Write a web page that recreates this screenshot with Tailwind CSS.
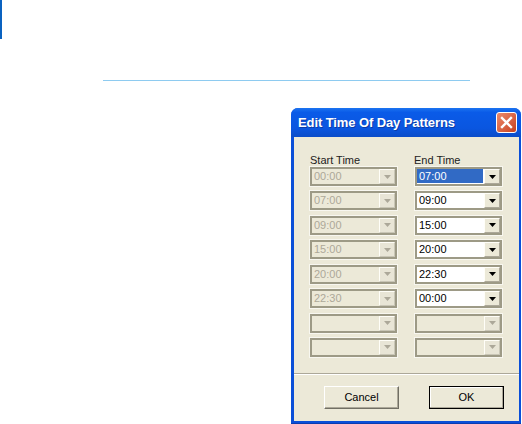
<!DOCTYPE html>
<html lang="en">
<head>
<meta charset="UTF-8">
<title>Edit Time Of Day Patterns</title>
<script src="https://cdn.jsdelivr.net/npm/@tailwindcss/browser@4"></script>
</head>
<body class="bg-white w-[522px] h-[424px] overflow-hidden font-['Liberation_Sans',sans-serif]">

<!-- page behind the dialog -->
<div class="w-[2px] h-[39px] bg-[#0a62c0]"></div>
<div class="ml-[103px] mt-[41px] w-[367px] h-[1px] bg-[#8ecbf0]"></div>

<!-- dialog -->
<div class="ml-[291px] mt-[27px] w-[230px] h-[316px] flex flex-col bg-[#0a4fd8] rounded-t-[7px] pl-[3px] pr-[2px] pb-[3px] shadow-[inset_0_-1px_0_#0a3cb0]">
  <div class="h-[29px] shrink-0 -ml-[3px] -mr-[2px] pl-[7px] pr-[4px] flex items-center justify-between rounded-t-[7px] bg-[linear-gradient(to_bottom,#1c74f0_0%,#0a5be8_15%,#0a56e0_70%,#0a4cc8_100%)]">
    <span class="text-white font-bold text-[13px] tracking-[-0.1px] [text-shadow:1px_1px_0_#0a3ca8]">Edit Time Of Day Patterns</span>
    <div class="w-[21px] h-[21px] rounded-[3px] border border-white bg-gradient-to-br from-[#ec8a6c] to-[#c8401c] flex items-center justify-center">
      <svg width="13" height="13" viewBox="0 0 13 13"><path d="M2 2 L11 11 M11 2 L2 11" stroke="#fff" stroke-width="2.4" stroke-linecap="square"/></svg>
    </div>
  </div>

  <div class="flex-1 bg-[#ece9d8] flex flex-col">
    <div class="pl-[15px] pt-[17px] grid grid-cols-[89px_89px] gap-x-[16px]">
      <div class="text-[11px] leading-[13px] text-[#222] pl-[1px]">Start Time</div>
      <div class="text-[11px] leading-[13px] text-[#222]">End Time</div>
    </div>

    <div class="pl-[15px] -mt-[1px] grid grid-cols-[89px_89px] gap-x-[16px] gap-y-[3.43px]">
      <!-- row 1 -->
      <div class="h-[21px] border border-[#f8f7f0]"><div class="h-full flex border-2 border-[#9d9a86] bg-[#ece9d8]"><span class="flex-1 text-[11px] leading-[15px] text-[#aca899] pl-[2px]">00:00</span><span class="w-[16px] h-[15px] bg-[#e8e5d6] border border-t-[#fffef8] border-l-[#fffef8] border-r-[#c9c6b6] border-b-[#c9c6b6] flex items-center justify-center"><svg width="7" height="4" viewBox="0 0 7 4"><path d="M0 0H7L3.500 4Z" fill="#aca899"/></svg></span></div></div>
      <div class="h-[21px] border border-[#f8f7f0]"><div class="h-full flex border-2 border-[#9d9a86] bg-white"><span class="flex-1 text-[11px] leading-[14px] h-[14px] mr-[1px] text-white bg-[#316ac5] pl-[2px]">07:00</span><span class="w-[16px] h-[15px] bg-[#ece9d8] border border-t-[#fffef8] border-l-[#fffef8] border-r-[#aca899] border-b-[#aca899] flex items-center justify-center"><svg width="7" height="4" viewBox="0 0 7 4"><path d="M0 0H7L3.500 4Z" fill="#000"/></svg></span></div></div>
      <!-- row 2 -->
      <div class="h-[21px] border border-[#f8f7f0]"><div class="h-full flex border-2 border-[#9d9a86] bg-[#ece9d8]"><span class="flex-1 text-[11px] leading-[15px] text-[#aca899] pl-[2px]">07:00</span><span class="w-[16px] h-[15px] bg-[#e8e5d6] border border-t-[#fffef8] border-l-[#fffef8] border-r-[#c9c6b6] border-b-[#c9c6b6] flex items-center justify-center"><svg width="7" height="4" viewBox="0 0 7 4"><path d="M0 0H7L3.500 4Z" fill="#aca899"/></svg></span></div></div>
      <div class="h-[21px] border border-[#f8f7f0]"><div class="h-full flex border-2 border-[#9d9a86] bg-white"><span class="flex-1 text-[11px] leading-[15px] text-black pl-[2px]">09:00</span><span class="w-[16px] h-[15px] bg-[#ece9d8] border border-t-[#fffef8] border-l-[#fffef8] border-r-[#aca899] border-b-[#aca899] flex items-center justify-center"><svg width="7" height="4" viewBox="0 0 7 4"><path d="M0 0H7L3.500 4Z" fill="#000"/></svg></span></div></div>
      <!-- row 3 -->
      <div class="h-[21px] border border-[#f8f7f0]"><div class="h-full flex border-2 border-[#9d9a86] bg-[#ece9d8]"><span class="flex-1 text-[11px] leading-[15px] text-[#aca899] pl-[2px]">09:00</span><span class="w-[16px] h-[15px] bg-[#e8e5d6] border border-t-[#fffef8] border-l-[#fffef8] border-r-[#c9c6b6] border-b-[#c9c6b6] flex items-center justify-center"><svg width="7" height="4" viewBox="0 0 7 4"><path d="M0 0H7L3.500 4Z" fill="#aca899"/></svg></span></div></div>
      <div class="h-[21px] border border-[#f8f7f0]"><div class="h-full flex border-2 border-[#9d9a86] bg-white"><span class="flex-1 text-[11px] leading-[15px] text-black pl-[2px]">15:00</span><span class="w-[16px] h-[15px] bg-[#ece9d8] border border-t-[#fffef8] border-l-[#fffef8] border-r-[#aca899] border-b-[#aca899] flex items-center justify-center"><svg width="7" height="4" viewBox="0 0 7 4"><path d="M0 0H7L3.500 4Z" fill="#000"/></svg></span></div></div>
      <!-- row 4 -->
      <div class="h-[21px] border border-[#f8f7f0]"><div class="h-full flex border-2 border-[#9d9a86] bg-[#ece9d8]"><span class="flex-1 text-[11px] leading-[15px] text-[#aca899] pl-[2px]">15:00</span><span class="w-[16px] h-[15px] bg-[#e8e5d6] border border-t-[#fffef8] border-l-[#fffef8] border-r-[#c9c6b6] border-b-[#c9c6b6] flex items-center justify-center"><svg width="7" height="4" viewBox="0 0 7 4"><path d="M0 0H7L3.500 4Z" fill="#aca899"/></svg></span></div></div>
      <div class="h-[21px] border border-[#f8f7f0]"><div class="h-full flex border-2 border-[#9d9a86] bg-white"><span class="flex-1 text-[11px] leading-[15px] text-black pl-[2px]">20:00</span><span class="w-[16px] h-[15px] bg-[#ece9d8] border border-t-[#fffef8] border-l-[#fffef8] border-r-[#aca899] border-b-[#aca899] flex items-center justify-center"><svg width="7" height="4" viewBox="0 0 7 4"><path d="M0 0H7L3.500 4Z" fill="#000"/></svg></span></div></div>
      <!-- row 5 -->
      <div class="h-[21px] border border-[#f8f7f0]"><div class="h-full flex border-2 border-[#9d9a86] bg-[#ece9d8]"><span class="flex-1 text-[11px] leading-[15px] text-[#aca899] pl-[2px]">20:00</span><span class="w-[16px] h-[15px] bg-[#e8e5d6] border border-t-[#fffef8] border-l-[#fffef8] border-r-[#c9c6b6] border-b-[#c9c6b6] flex items-center justify-center"><svg width="7" height="4" viewBox="0 0 7 4"><path d="M0 0H7L3.500 4Z" fill="#aca899"/></svg></span></div></div>
      <div class="h-[21px] border border-[#f8f7f0]"><div class="h-full flex border-2 border-[#9d9a86] bg-white"><span class="flex-1 text-[11px] leading-[15px] text-black pl-[2px]">22:30</span><span class="w-[16px] h-[15px] bg-[#ece9d8] border border-t-[#fffef8] border-l-[#fffef8] border-r-[#aca899] border-b-[#aca899] flex items-center justify-center"><svg width="7" height="4" viewBox="0 0 7 4"><path d="M0 0H7L3.500 4Z" fill="#000"/></svg></span></div></div>
      <!-- row 6 -->
      <div class="h-[21px] border border-[#f8f7f0]"><div class="h-full flex border-2 border-[#9d9a86] bg-[#ece9d8]"><span class="flex-1 text-[11px] leading-[15px] text-[#aca899] pl-[2px]">22:30</span><span class="w-[16px] h-[15px] bg-[#e8e5d6] border border-t-[#fffef8] border-l-[#fffef8] border-r-[#c9c6b6] border-b-[#c9c6b6] flex items-center justify-center"><svg width="7" height="4" viewBox="0 0 7 4"><path d="M0 0H7L3.500 4Z" fill="#aca899"/></svg></span></div></div>
      <div class="h-[21px] border border-[#f8f7f0]"><div class="h-full flex border-2 border-[#9d9a86] bg-white"><span class="flex-1 text-[11px] leading-[15px] text-black pl-[2px]">00:00</span><span class="w-[16px] h-[15px] bg-[#ece9d8] border border-t-[#fffef8] border-l-[#fffef8] border-r-[#aca899] border-b-[#aca899] flex items-center justify-center"><svg width="7" height="4" viewBox="0 0 7 4"><path d="M0 0H7L3.500 4Z" fill="#000"/></svg></span></div></div>
      <!-- row 7 -->
      <div class="h-[21px] border border-[#f8f7f0]"><div class="h-full flex border-2 border-[#9d9a86] bg-[#ece9d8]"><span class="flex-1"></span><span class="w-[16px] h-[15px] bg-[#e8e5d6] border border-t-[#fffef8] border-l-[#fffef8] border-r-[#c9c6b6] border-b-[#c9c6b6] flex items-center justify-center"><svg width="7" height="4" viewBox="0 0 7 4"><path d="M0 0H7L3.500 4Z" fill="#aca899"/></svg></span></div></div>
      <div class="h-[21px] border border-[#f8f7f0]"><div class="h-full flex border-2 border-[#9d9a86] bg-[#ece9d8]"><span class="flex-1"></span><span class="w-[16px] h-[15px] bg-[#e8e5d6] border border-t-[#fffef8] border-l-[#fffef8] border-r-[#c9c6b6] border-b-[#c9c6b6] flex items-center justify-center"><svg width="7" height="4" viewBox="0 0 7 4"><path d="M0 0H7L3.500 4Z" fill="#aca899"/></svg></span></div></div>
      <!-- row 8 -->
      <div class="h-[21px] border border-[#f8f7f0]"><div class="h-full flex border-2 border-[#9d9a86] bg-[#ece9d8]"><span class="flex-1"></span><span class="w-[16px] h-[15px] bg-[#e8e5d6] border border-t-[#fffef8] border-l-[#fffef8] border-r-[#c9c6b6] border-b-[#c9c6b6] flex items-center justify-center"><svg width="7" height="4" viewBox="0 0 7 4"><path d="M0 0H7L3.500 4Z" fill="#aca899"/></svg></span></div></div>
      <div class="h-[21px] border border-[#f8f7f0]"><div class="h-full flex border-2 border-[#9d9a86] bg-[#ece9d8]"><span class="flex-1"></span><span class="w-[16px] h-[15px] bg-[#e8e5d6] border border-t-[#fffef8] border-l-[#fffef8] border-r-[#c9c6b6] border-b-[#c9c6b6] flex items-center justify-center"><svg width="7" height="4" viewBox="0 0 7 4"><path d="M0 0H7L3.500 4Z" fill="#aca899"/></svg></span></div></div>
    </div>

    <!-- footer -->
    <div class="mt-auto h-[48px] border-t border-[#aca899] shadow-[inset_0_1px_0_#fff] flex items-start pt-[12px] pl-[30px] gap-[30px]">
      <button class="w-[75px] h-[23px] bg-[#ece9d8] border border-t-[#fff] border-l-[#fff] border-r-[#716f64] border-b-[#716f64] shadow-[inset_-1px_-1px_0_#aca899] text-[11px] text-black">Cancel</button>
      <button class="w-[75px] h-[23px] bg-[#ece9d8] border border-black shadow-[inset_-1px_-1px_0_#aca899,inset_1px_1px_0_#fff] text-[11px] text-black">OK</button>
    </div>
  </div>
</div>
</body>
</html>
